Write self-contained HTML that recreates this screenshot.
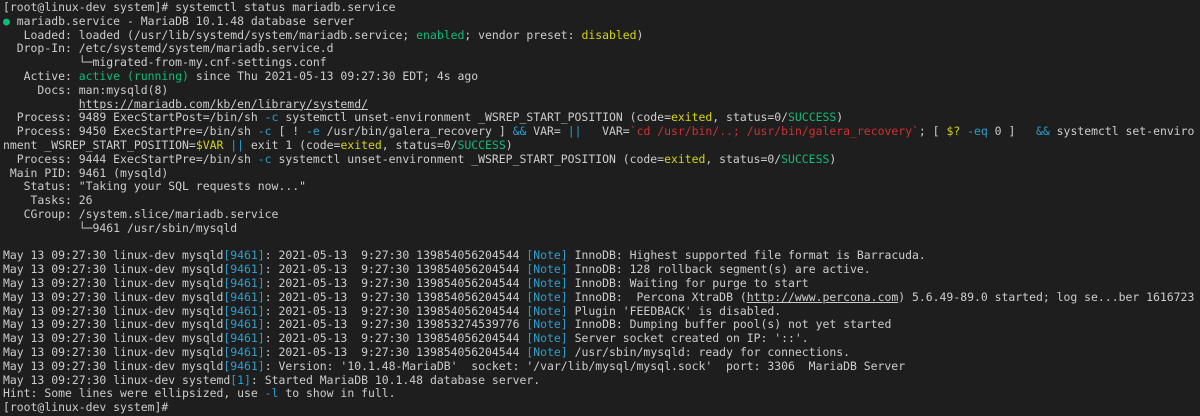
<!DOCTYPE html>
<html><head><meta charset="utf-8"><style>
html,body{margin:0;padding:0;background:#1e1e1e;width:1200px;height:416px;overflow:hidden}
pre{margin:0;padding:1px 0 0 3px;font-family:"DejaVu Sans Mono","Liberation Mono",monospace;font-size:11.45px;line-height:13.8px;color:#cccccc;white-space:pre}
.g{color:#0dbc79}.y{color:#d5d50f}.b{color:#2a9fd0}.r{color:#cd3131}.u{text-decoration:underline}
</style></head><body><pre>[root@linux-dev system]# systemctl status mariadb.service
<span class="g">●</span> mariadb.service - MariaDB 10.1.48 database server
   Loaded: loaded (/usr/lib/systemd/system/mariadb.service; <span class="g">enabled</span>; vendor preset: <span class="y">disabled</span>)
  Drop-In: /etc/systemd/system/mariadb.service.d
           └─migrated-from-my.cnf-settings.conf
   Active: <span class="g">active (running)</span> since Thu 2021-05-13 09:27:30 EDT; 4s ago
     Docs: man:mysqld(8)
           <span class="u">https://mariadb.com/kb/en/library/systemd/</span>
  Process: 9489 ExecStartPost=/bin/sh <span class="b">-c</span> systemctl unset-environment _WSREP_START_POSITION (code=<span class="y">exited</span>, status=0/<span class="g">SUCCESS</span>)
  Process: 9450 ExecStartPre=/bin/sh <span class="b">-c</span> [ ! <span class="b">-e</span> /usr/bin/galera_recovery ] <span class="b">&amp;&amp;</span> VAR= <span class="b">||</span>   VAR=<span class="r">`cd /usr/bin/..; /usr/bin/galera_recovery`</span>; [ <span class="y">$?</span> <span class="b">-eq</span> 0 ]   <span class="b">&amp;&amp;</span> systemctl set-enviro
nment _WSREP_START_POSITION=<span class="y">$VAR</span> <span class="b">||</span> exit 1 (code=<span class="y">exited</span>, status=0/<span class="g">SUCCESS</span>)
  Process: 9444 ExecStartPre=/bin/sh <span class="b">-c</span> systemctl unset-environment _WSREP_START_POSITION (code=<span class="y">exited</span>, status=0/<span class="g">SUCCESS</span>)
 Main PID: 9461 (mysqld)
   Status: "Taking your SQL requests now..."
    Tasks: 26
   CGroup: /system.slice/mariadb.service
           └─9461 /usr/sbin/mysqld

May 13 09:27:30 linux-dev mysqld<span class="b">[9461]</span>: 2021-05-13  9:27:30 139854056204544 <span class="b">[Note]</span> InnoDB: Highest supported file format is Barracuda.
May 13 09:27:30 linux-dev mysqld<span class="b">[9461]</span>: 2021-05-13  9:27:30 139854056204544 <span class="b">[Note]</span> InnoDB: 128 rollback segment(s) are active.
May 13 09:27:30 linux-dev mysqld<span class="b">[9461]</span>: 2021-05-13  9:27:30 139854056204544 <span class="b">[Note]</span> InnoDB: Waiting for purge to start
May 13 09:27:30 linux-dev mysqld<span class="b">[9461]</span>: 2021-05-13  9:27:30 139854056204544 <span class="b">[Note]</span> InnoDB:  Percona XtraDB (<span class="u">http://www.percona.com</span>) 5.6.49-89.0 started; log se...ber 1616723
May 13 09:27:30 linux-dev mysqld<span class="b">[9461]</span>: 2021-05-13  9:27:30 139854056204544 <span class="b">[Note]</span> Plugin 'FEEDBACK' is disabled.
May 13 09:27:30 linux-dev mysqld<span class="b">[9461]</span>: 2021-05-13  9:27:30 139853274539776 <span class="b">[Note]</span> InnoDB: Dumping buffer pool(s) not yet started
May 13 09:27:30 linux-dev mysqld<span class="b">[9461]</span>: 2021-05-13  9:27:30 139854056204544 <span class="b">[Note]</span> Server socket created on IP: '::'.
May 13 09:27:30 linux-dev mysqld<span class="b">[9461]</span>: 2021-05-13  9:27:30 139854056204544 <span class="b">[Note]</span> /usr/sbin/mysqld: ready for connections.
May 13 09:27:30 linux-dev mysqld<span class="b">[9461]</span>: Version: '10.1.48-MariaDB'  socket: '/var/lib/mysql/mysql.sock'  port: 3306  MariaDB Server
May 13 09:27:30 linux-dev systemd<span class="b">[1]</span>: Started MariaDB 10.1.48 database server.
Hint: Some lines were ellipsized, use <span class="b">-l</span> to show in full.
[root@linux-dev system]#</pre></body></html>
